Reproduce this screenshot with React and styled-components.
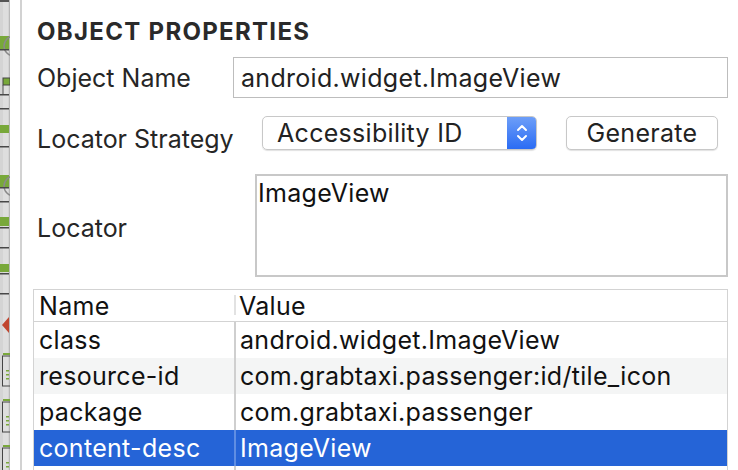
import React from 'react'
import styled, { createGlobalStyle } from 'styled-components'

const GlobalStyle = createGlobalStyle`
  html, body {
    margin: 0;
    padding: 0;
    background: #fff;
  }
  body {
    font-family: Inter, "Noto Sans", sans-serif;
    color: #222;
  }
`

const Page = styled.div`
  display: flex;
  width: 738px;
  height: 470px;
  overflow: hidden;
  background: #fff;
`

const CanvasEdge = styled.div`
  width: 10px;
  flex: none;
  svg {
    display: block;
  }
`

const Gutter = styled.div`
  width: 10px;
  flex: none;
  border-right: 2px solid #d2d2d2;
`

const Panel = styled.div`
  flex: 1;
  min-width: 0;
  padding: 0 10px 0 11px;
  display: flex;
  flex-direction: column;
`

const Title = styled.h2`
  flex: none;
  margin: 0;
  padding: 18px 0 0 4px;
  font-size: 24px;
  line-height: 28px;
  font-weight: 700;
  color: #2a2a2a;
  letter-spacing: 1.3px;
`

const FormRow = styled.div`
  flex: none;
  display: flex;
  align-items: center;
  height: ${p => p.$height}px;
  margin-top: ${p => p.$gap}px;
  padding-left: 4px;
`

const Label = styled.label`
  width: ${p => p.$width}px;
  flex: none;
  padding-top: ${p => p.$drop || 0}px;
  font-size: 25px;
  color: #262626;
`

const TextInput = styled.div`
  flex: 1;
  height: 100%;
  box-sizing: border-box;
  border: 1px solid #bdbdbd;
  padding-left: 7px;
  display: flex;
  align-items: center;
  font-size: 25px;
  letter-spacing: 0.3px;
  color: #222;
`

const Select = styled.div`
  width: 275px;
  height: 100%;
  box-sizing: border-box;
  border: 1px solid #c8c8c8;
  border-radius: 5px;
  box-shadow: 0 1px 1px rgba(0, 0, 0, 0.12);
  display: flex;
  overflow: hidden;
`

const SelectValue = styled.div`
  flex: 1;
  padding-left: 14px;
  display: flex;
  align-items: center;
  font-size: 25px;
  letter-spacing: 0.3px;
  color: #222;
`

const Stepper = styled.div`
  width: 29px;
  flex: none;
  background: linear-gradient(#6d9ef8, #2b6cf4);
  display: flex;
  align-items: center;
  justify-content: center;
`

const Button = styled.button`
  margin-left: 29px;
  width: 152px;
  height: 100%;
  box-sizing: border-box;
  border: 1px solid #c8c8c8;
  border-radius: 5px;
  background: #fff;
  box-shadow: 0 1px 1px rgba(0, 0, 0, 0.12);
  font-family: inherit;
  font-size: 25px;
  letter-spacing: 0.3px;
  color: #222;
  padding: 0;
`

const TextArea = styled.div`
  flex: 1;
  height: 100%;
  box-sizing: border-box;
  border: 2px solid #c8c8c8;
  padding: 3px 1px;
  font-size: 25px;
  line-height: 28px;
  letter-spacing: 0.3px;
  color: #111;
`

const Table = styled.div`
  margin-top: 12px;
  border: 1px solid #d3d3d3;
  border-bottom: none;
  flex: 1;
  min-height: 0;
  overflow: hidden;
  display: grid;
  grid-template-columns: 200px 1fr;
  grid-auto-rows: 36px;
  grid-template-rows: 32px;
  align-content: start;
`

const HeadCell = styled.div`
  border-bottom: 1px solid #d3d3d3;
  display: flex;
  align-items: center;
  padding-left: 5px;
  font-size: 25px;
  letter-spacing: 0.3px;
  color: #111;
  position: relative;
  &:nth-child(2)::before {
    content: '';
    position: absolute;
    left: 0;
    top: 5px;
    bottom: 6px;
    width: 2px;
    background: #e2e2e2;
  }
`

const Cell = styled.div`
  display: flex;
  align-items: center;
  padding-left: ${p => (p.$value ? 4 : 5)}px;
  font-size: 25px;
  letter-spacing: 0.3px;
  white-space: nowrap;
  overflow: hidden;
  background: ${p => (p.$selected ? '#2564d7' : p.$striped ? '#f4f5f5' : '#fff')};
  color: ${p => (p.$selected ? '#fff' : '#111')};
  border-left: ${p =>
    p.$value ? (p.$selected ? '2px solid #5f8ee3' : '2px solid #cfcfcf') : 'none'};
`

const rows = [
  ['class', 'android.widget.ImageView'],
  ['resource-id', 'com.grabtaxi.passenger:id/tile_icon'],
  ['package', 'com.grabtaxi.passenger'],
  ['content-desc', 'ImageView'],
  ['', ''],
]

const EdgeArt = () => {
  const dark = [49, 94, 108, 146, 187, 201, 227, 247, 273, 293]
  const green = [[36, 13], [125, 8], [175, 12], [217, 9], [264, 8]]
  const boxes = [356, 402, 448]
  return (
    <svg width="10" height="470" viewBox="0 0 10 470">
      <rect width="10" height="470" fill="#d4d4d4" />
      <rect x="3" width="5" height="470" fill="#dedede" />
      <rect x="9" width="1" height="470" fill="#b9b9b9" />
      <rect width="9" height="2" fill="#555" />
      {green.map(([y, h]) => (
        <rect key={y} y={y} width="9" height={h} fill="#78a83a" />
      ))}
      <circle cx="14" cy="46" r="10" fill="none" stroke="#8a8a8a" strokeWidth="1.5" />
      <circle cx="14" cy="186" r="10" fill="none" stroke="#8a8a8a" strokeWidth="1.5" />
      <rect x="3" y="78" width="7" height="7" fill="#78a83a" stroke="#444" strokeWidth="1" />
      <rect x="2.5" y="85" width="1" height="10" fill="#555" />
      {dark.map(y => (
        <rect key={y} y={y} width="9" height="1.5" fill="#484848" />
      ))}
      <polygon points="2,325 9,317 9,333" fill="#c0452e" />
      {boxes.map(y => (
        <g key={y}>
          <rect x="3" y={y - 3} width="7" height="2" fill="#7aa83c" />
          <rect x="2.5" y={y} width="8" height="30" fill="none" stroke="#444" strokeWidth="1" />
          <rect x="6" y={y + 14} width="3" height="1.5" fill="#7aa83c" />
          <rect x="6" y={y + 18} width="3" height="1.5" fill="#7aa83c" />
          <rect x="6" y={y + 22} width="3" height="1.5" fill="#7aa83c" />
        </g>
      ))}
    </svg>
  )
}

const Chevrons = () => (
  <svg width="12" height="20" viewBox="0 0 12 20" fill="none" stroke="#fff" strokeWidth="2" strokeLinecap="round" strokeLinejoin="round">
    <polyline points="2,7 6,3 10,7" />
    <polyline points="2,13 6,17 10,13" />
  </svg>
)

export default function App() {
  return (
    <Page>
      <GlobalStyle />
      <CanvasEdge>
        <EdgeArt />
      </CanvasEdge>
      <Gutter />
      <Panel>
        <Title>OBJECT PROPERTIES</Title>
        <FormRow $height={41} $gap={11}>
          <Label $width={196}>Object Name</Label>
          <TextInput>android.widget.ImageView</TextInput>
        </FormRow>
        <FormRow $height={34} $gap={18}>
          <Label $width={225} $drop={12}>Locator Strategy</Label>
          <Select>
            <SelectValue>Accessibility ID</SelectValue>
            <Stepper>
              <Chevrons />
            </Stepper>
          </Select>
          <Button>Generate</Button>
        </FormRow>
        <FormRow $height={103} $gap={24}>
          <Label $width={218} $drop={4}>Locator</Label>
          <TextArea>ImageView</TextArea>
        </FormRow>
        <Table>
          <HeadCell>Name</HeadCell>
          <HeadCell>Value</HeadCell>
          {rows.map(([name, value], i) => (
            <React.Fragment key={i}>
              <Cell $striped={i === 1} $selected={i === 3}>{name}</Cell>
              <Cell $value $striped={i === 1} $selected={i === 3}>{value}</Cell>
            </React.Fragment>
          ))}
        </Table>
      </Panel>
    </Page>
  )
}
